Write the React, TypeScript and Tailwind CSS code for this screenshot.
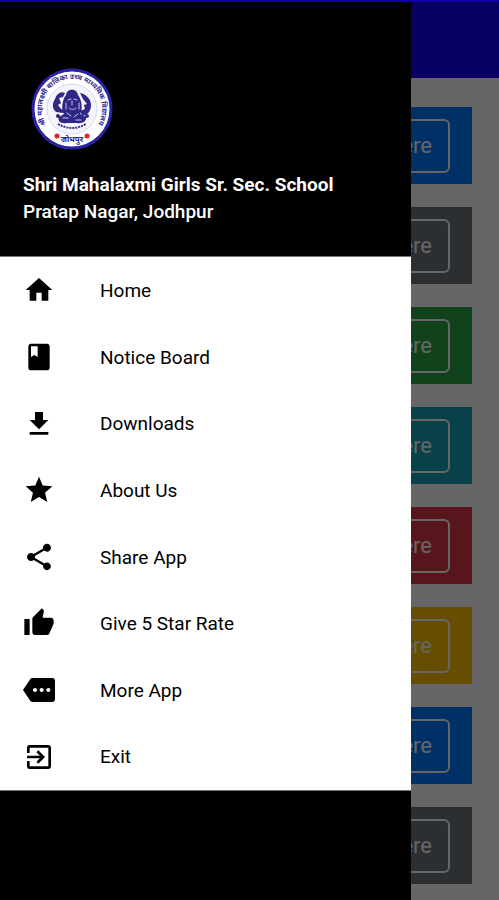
import type { IconType } from "react-icons";
import {
  MdClass,
  MdExitToApp,
  MdFileDownload,
  MdHome,
  MdMore,
  MdShare,
  MdStar,
  MdThumbUp,
} from "react-icons/md";

const menu: { label: string; icon: IconType }[] = [
  { label: "Home", icon: MdHome },
  { label: "Notice Board", icon: MdClass },
  { label: "Downloads", icon: MdFileDownload },
  { label: "About Us", icon: MdStar },
  { label: "Share App", icon: MdShare },
  { label: "Give 5 Star Rate", icon: MdThumbUp },
  { label: "More App", icon: MdMore },
  { label: "Exit", icon: MdExitToApp },
];

const cards = [
  "bg-[#007bff]",
  "bg-[#6c757d]",
  "bg-[#28a745]",
  "bg-[#17a2b8]",
  "bg-[#dc3545]",
  "bg-[#ffc107]",
  "bg-[#007bff]",
  "bg-[#6c757d]",
];

function SchoolLogo() {
  return (
    <svg viewBox="0 0 84 84" className="ml-[7px] size-[84px]" role="img" aria-label="School emblem">
      <defs>
        <path id="ring" d="M18 60 A30 30 0 1 1 66 60" />
      </defs>
      <circle cx="42" cy="42" r="39" fill="#fff" stroke="#2a22a4" strokeWidth="3" />
      <circle cx="42" cy="42" r="25" fill="#f5f4fb" stroke="#dcd9ee" strokeWidth="1" />
      <text fill="#302a92" fontSize="7" fontWeight="700" fontFamily="'Noto Sans Devanagari', 'Noto Sans', sans-serif">
        <textPath href="#ring" startOffset="50%" textAnchor="middle">
          श्री महालक्ष्मी बालिका उच्च माध्यमिक विद्यालय
        </textPath>
      </text>
      <text x="42" y="75" textAnchor="middle" fill="#302a92" fontSize="8" fontWeight="700" fontFamily="'Noto Sans Devanagari', 'Noto Sans', sans-serif">
        जोधपुर
      </text>
      <circle cx="27" cy="69" r="2.5" fill="#e5202b" />
      <circle cx="57" cy="69" r="2.5" fill="#e5202b" />
      <g fill="#2f2786">
        <path d="M36 28 C37 21 47 21 48 28 C52 33 53 43 50 47 L56 50 C57 54 52 57 47 56 L37 56 C31 57 27 54 29 50 L34 47 C31 43 32 33 36 28Z" />
        <path d="M25 32 C27 26 31 24 35 26 L33 30 L29 31 L31 36 L28 38 L31 42 L34 43 L33 46 L26 45 C22 41 22 37 25 32Z" />
        <path d="M50 26 C56 27 61 32 61 38 C61 44 58 48 52 49 L50 44 L55 42 L54 38 L57 37 L53 32Z" />
        <circle cx="28" cy="49" r="2" />
        <circle cx="57" cy="49" r="2" />
      </g>
      <g fill="none" stroke="#c9c5e8" strokeWidth="1" strokeLinecap="round">
        <path d="M38 33 L41 32 M44 32 L47 33 M42 34 V38 M39 41 C41 43 44 43 46 41 M36 36 V42 M49 36 V42 M37 46 L41 49 M48 47 L44 50 M33 51 H38 M46 53 H51" />
      </g>
      <path d="M28 57 Q42 65 56 57" fill="none" stroke="#302a92" strokeWidth="2" strokeDasharray="2 1" />
    </svg>
  );
}

export default function App() {
  return (
    <div className="relative h-screen overflow-hidden bg-white font-['Roboto',sans-serif]">
      <div className="h-[2px] bg-[#1c00f0]" />
      <header className="h-[76px] bg-[#1200f0]" />
      <main className="flex flex-col gap-[23px] px-[27px] pt-[29px]">
        {cards.map((color, i) => (
          <section key={i} className={`flex h-[77px] shrink-0 items-center justify-end px-[22px] ${color}`}>
            <button className="h-[54px] rounded-md border-2 border-white px-4 text-[22px] text-white">
              Click Here
            </button>
          </section>
        ))}
      </main>

      <div className="absolute inset-0 bg-black/60" />
      <div className="absolute inset-x-0 top-0 h-[2px] bg-[#1000a8]" />

      <aside className="absolute bottom-0 left-0 top-[2px] flex w-[411px] max-w-full flex-col bg-black">
        <div className="flex h-[254px] flex-col px-[23px] pt-[65px] text-white">
          <SchoolLogo />
          <h1 className="mt-5 text-[19px] leading-[27px] font-bold">Shri Mahalaxmi Girls Sr. Sec. School</h1>
          <p className="text-[19px] leading-[27px] font-medium">Pratap Nagar, Jodhpur</p>
        </div>
        <nav className="grid flex-1 grid-rows-8 border-y border-[#777] bg-white">
          {menu.map(({ label, icon: Icon }) => (
            <button key={label} className="flex items-center gap-[45px] px-[23px] text-left text-[19px] text-black">
              <Icon className="size-8 shrink-0" aria-hidden />
              <span className="pt-[2px]">{label}</span>
            </button>
          ))}
        </nav>
        <div className="h-[109px]" />
      </aside>
    </div>
  );
}
